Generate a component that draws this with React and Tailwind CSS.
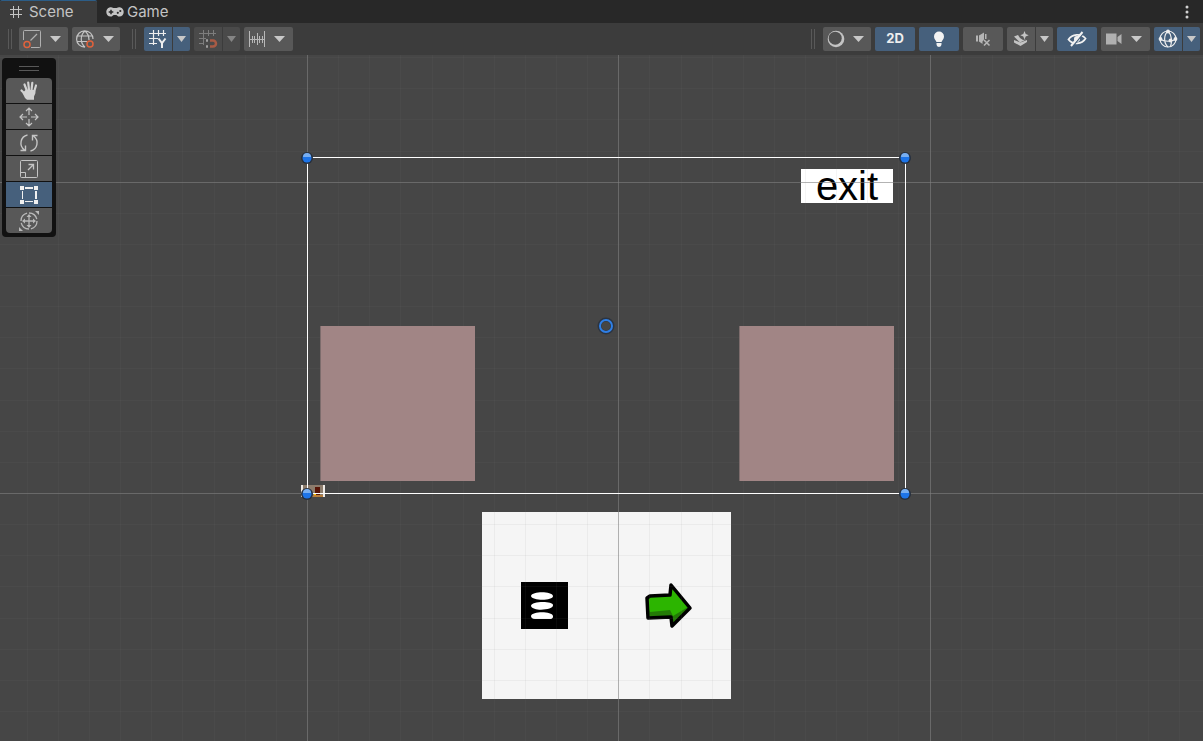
import React, { useState } from "react";
import clsx from "clsx";

const MAJOR = 311.3;
const MINOR = MAJOR / 10;
const ORIGIN = { x: 307, y: 438 };

// grid lines on both axes, every tenth one is a major line
function gridLines(origin, from, to) {
  const lines = [];
  for (let i = Math.ceil((from - origin) / MINOR); origin + i * MINOR < to; i++) {
    lines.push({ at: Math.round(origin + i * MINOR), major: i % 10 === 0 });
  }
  return lines;
}

const columns = gridLines(ORIGIN.x, 0, 3000);
const rows = gridLines(ORIGIN.y, 0, 2000);

function Caret({ small }) {
  return (
    <svg width={small ? 9 : 11} height="6" viewBox="0 0 10 6" preserveAspectRatio="none" fill="currentColor">
      <path d="M0 0h10L5 6z" />
    </svg>
  );
}

function HashIcon() {
  return (
    <svg width="14" height="14" viewBox="0 0 14 14" stroke="#c4c4c4" strokeWidth="1" shapeRendering="crispEdges">
      <path d="M4.5 1v12M9.5 1v12M1 4.5h12M1 9.5h12" />
    </svg>
  );
}

function GamepadIcon() {
  return (
    <svg width="18" height="12" viewBox="0 0 18 12">
      <path
        d="M5 1.2C2 1.2.3 3.4.3 6S2 10.6 4.6 10.6c1.8 0 2.5-1.7 3.2-1.7h2.4c.7 0 1.4 1.7 3.2 1.7 2.6 0 4.3-2 4.3-4.6S16 1.2 13 1.2c-1.6 0-2.1.8-3 .8H8c-.9 0-1.4-.8-3-.8z"
        fill="#c4c4c4"
      />
      <path d="M5 3.7v4.6M2.7 6h4.6" stroke="#282828" strokeWidth="1.5" />
      <circle cx="11.8" cy="6.8" r="1.1" fill="#282828" />
      <circle cx="14.3" cy="5" r="1.1" fill="#282828" />
    </svg>
  );
}

function PivotIcon() {
  return (
    <svg width="20" height="20" viewBox="0 0 20 20" fill="none" stroke="#b0b0b0">
      <path d="M1.5 11V2.5a1 1 0 0 1 1-1h15a1 1 0 0 1 1 1v15a1 1 0 0 1-1 1H9" />
      <path d="M8.5 11.5l6.500-6.500" strokeWidth="1.300" />
      <circle cx="5" cy="15.500" r="3" stroke="#e0623c" strokeWidth="1.500" />
    </svg>
  );
}

function GlobeIcon() {
  return (
    <svg width="20" height="20" viewBox="0 0 20 20" fill="none" stroke="#c4c4c4" strokeWidth="1.200">
      <path d="M18 10A8.200 8.200 0 1 0 10 18.200M2.800 7h14.400M2 12.500h10M10 2c-5 4-5 12 0 16.200M10 2c3 2.500 4 5 4 9" />
      <circle cx="15" cy="15" r="3" stroke="#e0623c" strokeWidth="1.500" />
    </svg>
  );
}

function GridYIcon() {
  return (
    <svg width="20" height="20" viewBox="0 0 20 20" fill="none" stroke="#eeeeee">
      <path d="M5.500 1v15M10.500 1v6M15.500 1v6M1 4.500h17M1 9.500h9M1 14.500h8" strokeWidth="1.200" />
      <path d="M10.500 9.500l3.500 4.500 3.500-4.500M14 13.500v5.500" strokeWidth="2" />
    </svg>
  );
}

function GridSnapIcon() {
  return (
    <svg width="20" height="20" viewBox="0 0 20 20" fill="none" stroke="#7d7d7d">
      <path d="M5.500 1v15M10.500 1v6M15.500 1v6M1 4.500h17M1 9.500h7M1 14.500h5" />
      <path d="M12 11.500h3a3 3 0 0 1 0 6h-3" stroke="#a85b45" strokeWidth="2.500" />
      <path d="M8 11.500h2M8 17.500h2" stroke="#a0a0a0" strokeWidth="2.500" />
    </svg>
  );
}

function RulerIcon() {
  return (
    <svg width="18" height="18" viewBox="0 0 18 18" stroke="#b8b8b8" shapeRendering="crispEdges">
      <path d="M1.500 1v16M16.500 1v16M1 9.500h16M4.500 6v7M6.500 6v7M9.500 3v12M11.500 6v7M14.500 6v7" />
    </svg>
  );
}

function ShadingIcon() {
  return (
    <svg width="18" height="18" viewBox="0 0 18 18">
      <circle cx="9" cy="9" r="8.300" fill="#c4c4c4" />
      <circle cx="8.200" cy="8.200" r="6.500" fill="#505050" />
    </svg>
  );
}

function BulbIcon() {
  return (
    <svg width="14" height="18" viewBox="0 0 14 18" fill="#f2f2f2">
      <path d="M7 1.500a5 5 0 0 0-5 5c0 2.500 1.800 3.500 2.500 5.500h5c.7-2 2.500-3 2.500-5.500a5 5 0 0 0-5-5zM4.500 13h5v1.500a2.500 2.500 0 0 1-5 0z" />
    </svg>
  );
}

function MuteIcon() {
  return (
    <svg width="18" height="16" viewBox="0 0 18 16" fill="#b5b5b5">
      <path d="M2 4.500h2v6H2zM5 4.500l5-3v7l-1.500 2V13L5 10.500zM11 3v5h1.500V3z" />
      <path d="M10 9l5.500 5.500M15.500 9l-5.500 5.500" stroke="#b5b5b5" strokeWidth="1.600" />
    </svg>
  );
}

function EffectsIcon() {
  return (
    <svg width="18" height="18" viewBox="0 0 18 18" fill="#c4c4c4">
      <path d="M12.500 1l1.200 3 3 1.200-3 1.200-1.200 3-1.200-3-3-1.200 3-1.200zM2 6.500l4-1.500 2 3 3 2 3-.5-6 3z" />
      <path d="M2 10l6.500 2.500L15 10v2l-6.500 4L2 12.500z" />
    </svg>
  );
}

function HiddenIcon() {
  return (
    <svg width="20" height="16" viewBox="0 0 20 16" fill="none" stroke="#f2f2f2">
      <path d="M1.500 8.500C5 3 14 2 18.500 7.500 15 13.500 5.500 14 1.500 8.500z" strokeWidth="1.800" />
      <circle cx="10" cy="8" r="3" fill="#f2f2f2" stroke="none" />
      <path d="M5.500 15.500L17 1.500" stroke="#46607c" strokeWidth="1.500" />
      <path d="M4 15L15.500 1" strokeWidth="2" />
    </svg>
  );
}

function CameraIcon() {
  return (
    <svg width="18" height="14" viewBox="0 0 18 14" fill="#b0b0b0">
      <path d="M1 1.500h10.500v11H1zM12.500 5l4-3v10l-4-3z" />
    </svg>
  );
}

function GizmoIcon() {
  return (
    <svg width="20" height="20" viewBox="0 0 20 20" fill="none" stroke="#eeeeee" strokeWidth="1.200">
      <circle cx="10" cy="10" r="8" />
      <path d="M10 2C5.500 6 5.500 14 10 18M10 2c4 4 4 11 2.500 15.500M2 10c4 3 12 3 16 0" />
      <g fill="#eeeeee" stroke="none">
        <circle cx="10" cy="2.500" r="1.900" />
        <circle cx="2.500" cy="10" r="1.900" />
        <circle cx="17.500" cy="10" r="1.900" />
        <circle cx="12.500" cy="11.500" r="1.900" />
      </g>
    </svg>
  );
}

function HandIcon() {
  return (
    <svg width="20" height="20" viewBox="0 0 20 20" fill="none" stroke="#d2d2d2" strokeLinecap="round">
      <path d="M8 10L5.500 3.500M10 9l-.8-7.500M12.500 9l.8-7.200M15 11l2-6.500" strokeWidth="2.200" />
      <path d="M6.500 13.500L2.500 9.500" strokeWidth="2.200" />
      <path d="M6.500 9h9.700l.3 3-1.500 3.500v3.300H8L6 17 3.500 12z" fill="#d2d2d2" stroke="none" />
    </svg>
  );
}

function MoveIcon() {
  return (
    <svg width="20" height="20" viewBox="0 0 20 20" fill="none" stroke="#c4c4c4" strokeWidth="1.200">
      <path d="M10 1v7M10 12v7M1 10h7M12 10h7M7 4l3-3 3 3M7 16l3 3 3-3M4 7l-3 3 3 3M16 7l3 3-3 3" />
    </svg>
  );
}

function RotateIcon() {
  return (
    <svg width="20" height="20" viewBox="0 0 20 20" fill="none" stroke="#c4c4c4" strokeWidth="1.400">
      <path d="M8.500 2C1.500 3.500-.5 12.500 5.500 17M1.500 17.500h5v-5M11.500 18c7-1.500 9-10.500 3-15M18.500 2.500h-5v5" />
    </svg>
  );
}

function ScaleIcon() {
  return (
    <svg width="20" height="20" viewBox="0 0 20 20" fill="none" stroke="#c4c4c4">
      <rect x="1.500" y="1.500" width="17" height="17" rx="1" />
      <path d="M1.500 13.500h5v5" />
      <path d="M9 11l5.500-5.500M9.500 5.500h5v5" strokeWidth="1.300" />
    </svg>
  );
}

function RectIcon() {
  return (
    <svg width="20" height="20" viewBox="0 0 20 20" fill="#f0f0f0" shapeRendering="crispEdges">
      <path d="M1 1h4v4H1zM15 1h4v4h-4zM1 15h4v4H1zM15 15h4v4h-4zM6 2h8v2H6zM6 16h8v1H6zM3 6h1v8H3zM16 6h2v8h-2z" />
    </svg>
  );
}

function TransformIcon() {
  return (
    <svg width="22" height="22" viewBox="0 0 22 22" fill="none" stroke="#b8b8b8" strokeWidth="1.300">
      <circle cx="11" cy="11" r="8" strokeDasharray="10.500 2" />
      <path d="M11 6v10M6 11h10" />
      <path d="M11 4l2.500 3h-5zM11 18l2.500-3h-5zM4 11l3-2.500v5zM18 11l-3-2.500v5zM17 1h4v4zM1 17v4h4z" fill="#b8b8b8" stroke="none" />
    </svg>
  );
}

const tools = [
  { name: "Hand", icon: <HandIcon /> },
  { name: "Move", icon: <MoveIcon /> },
  { name: "Rotate", icon: <RotateIcon /> },
  { name: "Scale", icon: <ScaleIcon /> },
  { name: "Rect", icon: <RectIcon /> },
  { name: "Transform", icon: <TransformIcon /> },
];

function Grip() {
  return (
    <div className="flex h-5 w-1 shrink-0 justify-between">
      <span className="w-px bg-[#595959]" />
      <span className="w-px bg-[#595959]" />
    </div>
  );
}

function ToolButton({ label, active, disabled, className, children }) {
  return (
    <button
      aria-label={label}
      disabled={disabled}
      className={clsx(
        "flex h-6 shrink-0 items-center justify-center",
        disabled ? "bg-[#4a4a4a] text-[#858585]" : "text-[#c8c8c8]",
        !disabled && (active ? "bg-[#46607c]" : "bg-[#585858]"),
        className
      )}
    >
      {children}
    </button>
  );
}

// icon button with its own drop-down arrow beside it
function SplitButton({ label, active, disabled, children }) {
  return (
    <div className="flex gap-px">
      <ToolButton label={label} active={active} disabled={disabled} className="w-7 rounded-l-xs">
        {children}
      </ToolButton>
      <ToolButton label={label + " options"} active={active} disabled={disabled} className="w-[17px] rounded-r-xs">
        <Caret small />
      </ToolButton>
    </div>
  );
}

function MenuButton({ label, className, children }) {
  return (
    <ToolButton label={label} className={clsx("gap-2 rounded-xs pr-1", className)}>
      {children}
      <Caret />
    </ToolButton>
  );
}

function Handle({ className }) {
  return (
    <svg width="12" height="12" viewBox="0 0 12 12" className={clsx("absolute", className)}>
      <circle cx="6" cy="6" r="6" fill="#26303f" />
      <circle cx="6" cy="6" r="4.500" fill="#1d74e8" />
      <path d="M2 5a4 4 0 0 1 8 0z" fill="#78aef0" />
    </svg>
  );
}

function SceneView() {
  const [tool, setTool] = useState("Rect");

  return (
    <main className="relative flex-1 overflow-hidden bg-[#464646]">
      {/* panel sprite */}
      <div className="absolute left-[482px] top-[457px] h-[187px] w-[249px] bg-[#f5f5f5]" />
      <button
        aria-label="Menu"
        className="absolute left-[521px] top-[527px] flex h-[47px] w-[47px] items-center justify-center bg-black"
      >
        <svg width="47" height="47" viewBox="0 0 47 47" fill="#fff">
          <path d="M10 14c1-5 21-5 22 0 0 5-21 5-22 0zM10 24c0-5 22-5 22-1 1 5-20 7-22 1zM10 34c1-5 21-5 22 0 0 1 0 3-3 3H14c-3 0-4-2-4-3z" />
        </svg>
      </button>
      <button aria-label="Next" className="absolute left-[645px] top-[527px]">
        <svg width="48" height="48" viewBox="0 0 48 48" strokeLinejoin="round">
          <path d="M2 16l3-2 20-1 1-10 19 23-18 18-1-9-23 1z" fill="#2cb500" />
          <path d="M3 34v-9l2 5 20-2 3 6 15-9-15 18-2-8z" fill="#237b06" />
          <path d="M2 16l3-2 20-1 1-10 19 23-18 18-1-9-23 1z" fill="none" stroke="#000" strokeWidth="3.500" />
        </svg>
      </button>
      <button className="absolute left-[801px] top-[114px] flex h-[34px] w-[92px] items-center justify-center bg-white font-['Liberation_Sans',Arial,sans-serif] text-[40px] leading-9 text-black">
        exit
      </button>

      {/* grid */}
      <svg className="pointer-events-none absolute inset-0 h-full w-full" fill="#808080" shapeRendering="crispEdges">
        {columns.map((line) => (
          <rect key={line.at} x={line.at} y="0" width="1" height="100%" opacity={line.major ? 0.6 : 0.08} />
        ))}
        {rows.map((line) => (
          <rect key={line.at} x="0" y={line.at} width="100%" height="1" opacity={line.major ? 0.6 : 0.08} />
        ))}
      </svg>

      <div className="absolute left-[320px] top-[271px] h-[155px] w-[155px] border-l border-[#7c6c6c] bg-[#a18585]" />
      <div className="absolute left-[739px] top-[271px] h-[155px] w-[155px] border-l border-[#7c6c6c] bg-[#a18585]" />

      {/* room sprite */}
      <svg width="24" height="12" viewBox="0 0 24 12" className="absolute left-[301px] top-[430px]">
        <path d="M0 0h24v12H0z" fill="#8c7c6c" />
        <path d="M0 0h2v12H0zM22 0h2v12h-2z" fill="#eeeae5" />
        <path d="M14 2h5v8h-5z" fill="#571406" />
        <path d="M12 10h10v2H12z" fill="#b77d3a" />
        <path d="M13 8h2v2h-2z" fill="#ffc400" />
      </svg>

      {/* selection */}
      <div className="absolute left-[307px] top-[102px] h-[337px] w-[599px] border border-white" />
      <Handle className="left-[301px] top-[97px]" />
      <Handle className="left-[899px] top-[97px]" />
      <Handle className="left-[301px] top-[433px]" />
      <Handle className="left-[899px] top-[433px]" />
      <svg width="18" height="18" viewBox="0 0 18 18" fill="none" className="absolute left-[597px] top-[262px]">
        <circle cx="9" cy="9" r="6.500" stroke="#2c3440" strokeWidth="4" />
        <circle cx="9" cy="9" r="6" stroke="#2f7fe6" strokeWidth="2" />
      </svg>

      {/* tools overlay */}
      <div className="absolute left-0.5 top-[3px] flex w-[54px] flex-col rounded-sm bg-[#111111] px-1 pb-1">
        <div className="flex h-5 flex-col items-center justify-center gap-[3px]">
          <span className="h-px w-5 bg-[#585858]" />
          <span className="h-px w-5 bg-[#585858]" />
        </div>
        <div className="flex flex-col gap-px overflow-hidden rounded-sm">
          {tools.map(({ name, icon }) => (
            <button
              key={name}
              aria-label={name}
              aria-pressed={tool === name}
              onClick={() => setTool(name)}
              className={clsx(
                "flex h-[25px] items-center justify-center",
                tool === name ? "bg-[#46607c]" : "bg-[#585858]"
              )}
            >
              {icon}
            </button>
          ))}
        </div>
      </div>
    </main>
  );
}

function App() {
  return (
    <div className="flex min-h-screen flex-col bg-[#3c3c3c] font-[Inter,sans-serif] text-[#c4c4c4]">
      <header className="flex h-[23px] items-stretch bg-[#282828] text-[15px] leading-5">
        <button className="flex w-[97px] items-center gap-1.5 rounded-t-xs border-t border-[#2c5d87] bg-[#3c3c3c] pl-[9px]">
          <HashIcon />
          Scene
        </button>
        <button className="flex items-center gap-[3px] border-t border-transparent pl-[9px]">
          <GamepadIcon />
          Game
        </button>
        <button aria-label="More" className="ml-auto flex w-8 items-center justify-center">
          <svg width="4" height="14" viewBox="0 0 4 14" fill="#d2d2d2">
            <circle cx="2" cy="2" r="1.500" />
            <circle cx="2" cy="7" r="1.500" />
            <circle cx="2" cy="12" r="1.500" />
          </svg>
        </button>
      </header>

      <div className="flex h-8 items-center justify-between pl-2 pr-[3px]">
        <div className="flex items-center gap-1">
          <Grip />
          <div className="ml-[3px] flex gap-1">
            <MenuButton label="Pivot" className="w-[49px]">
              <PivotIcon />
            </MenuButton>
            <MenuButton label="Orientation" className="w-12">
              <GlobeIcon />
            </MenuButton>
          </div>
          <div className="ml-2 mr-1">
            <Grip />
          </div>
          <SplitButton label="Grid" active>
            <GridYIcon />
          </SplitButton>
          <SplitButton label="Grid snapping" disabled>
            <GridSnapIcon />
          </SplitButton>
          <MenuButton label="Increment snapping" className="w-[49px]">
            <RulerIcon />
          </MenuButton>
        </div>

        <div className="flex items-center gap-1">
          <div className="mr-1">
            <Grip />
          </div>
          <MenuButton label="Shading" className="w-12">
            <ShadingIcon />
          </MenuButton>
          <ToolButton label="2D view" active className="w-10 rounded-xs text-[13px] font-bold">
            <span className="text-[#eeeeee]">2D</span>
          </ToolButton>
          <ToolButton label="Lighting" active className="w-10 rounded-xs">
            <BulbIcon />
          </ToolButton>
          <ToolButton label="Audio" className="w-10 rounded-xs">
            <MuteIcon />
          </ToolButton>
          <SplitButton label="Effects">
            <EffectsIcon />
          </SplitButton>
          <ToolButton label="Hidden objects" active className="w-10 rounded-xs">
            <HiddenIcon />
          </ToolButton>
          <MenuButton label="Camera" className="w-[49px]">
            <CameraIcon />
          </MenuButton>
          <SplitButton label="Gizmos" active>
            <GizmoIcon />
          </SplitButton>
        </div>
      </div>

      <SceneView />
    </div>
  );
}

export default App;
